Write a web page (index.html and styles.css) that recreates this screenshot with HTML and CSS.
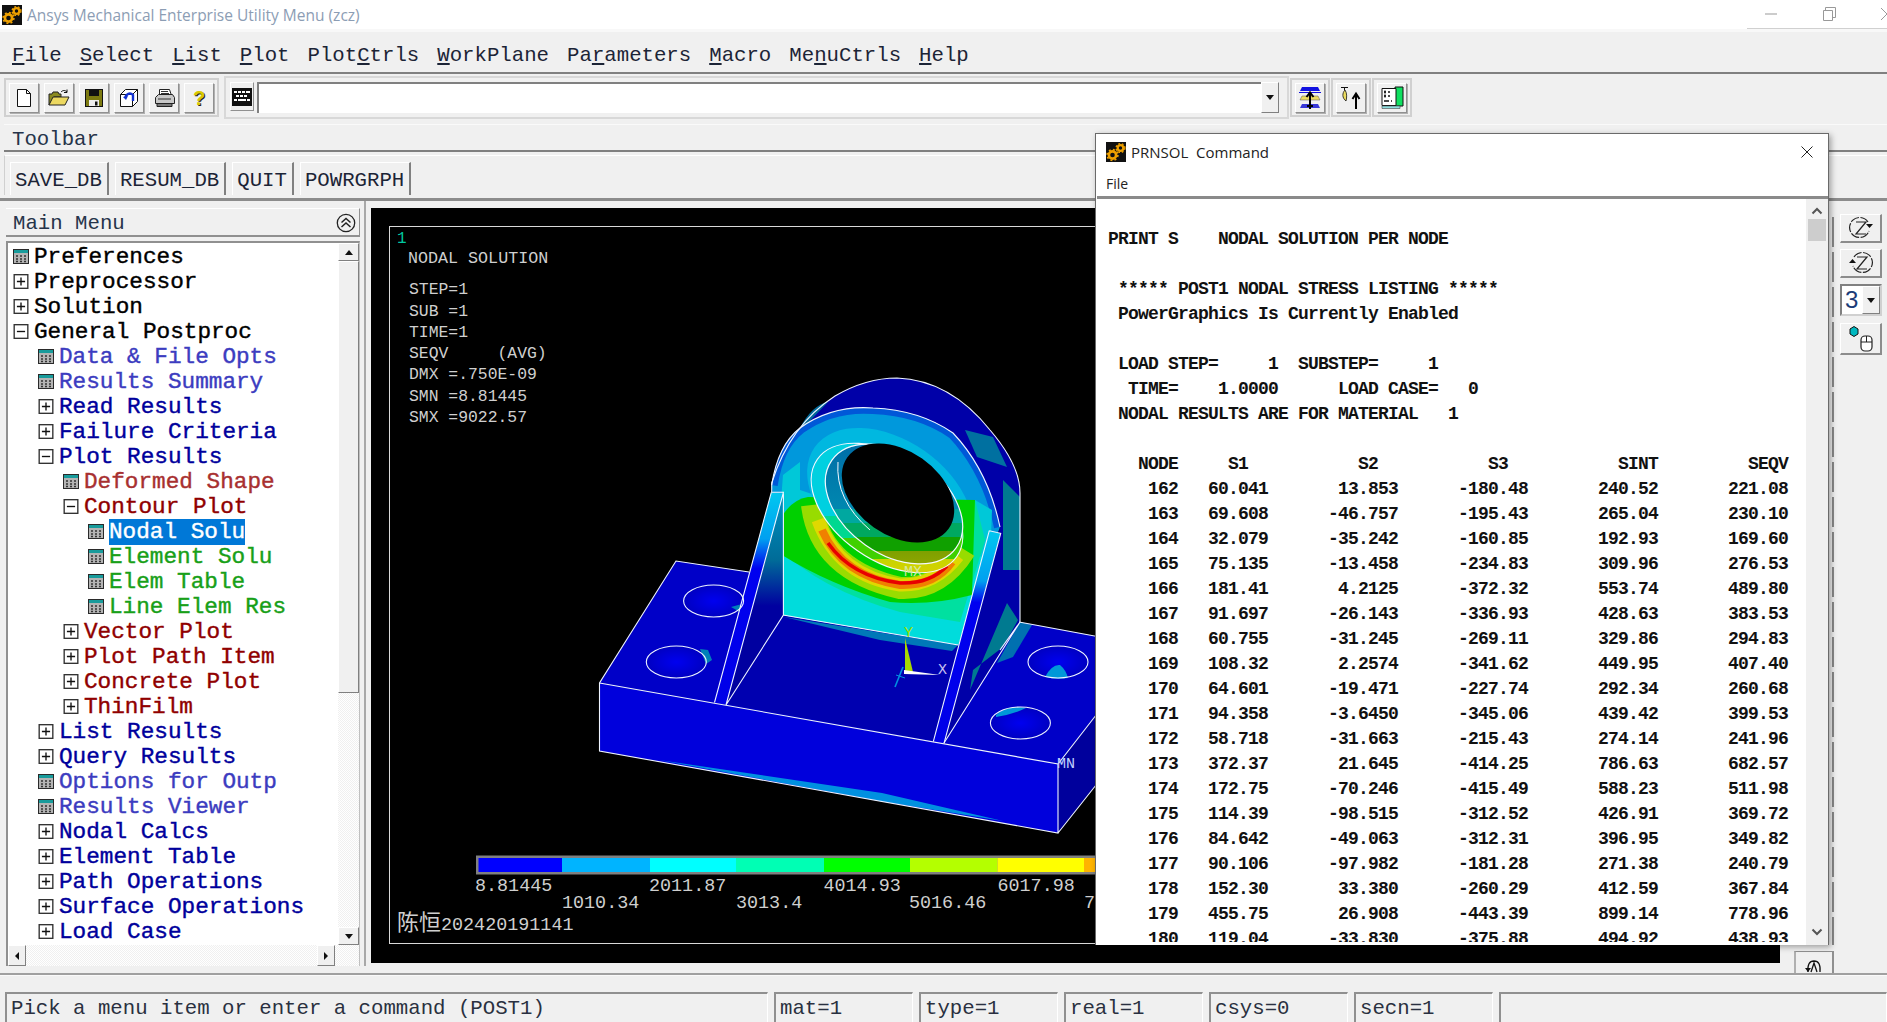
FILE: index.html
```html
<!DOCTYPE html>
<html lang="en">

<head>
    <meta charset="UTF-8">
    <title>Ansys Mechanical Enterprise Utility Menu (zcz)</title>
    <link rel="stylesheet" href="styles.css">
</head>

<body>
    <svg class="defs" width="0" height="0">
        <symbol id="gears" viewBox="0 0 20 20">
            <rect width="20" height="20" fill="#111" />
            <circle cx="6.5" cy="13" r="3.6" fill="none" stroke="#eea000" stroke-width="2.6" />
            <circle cx="6.5" cy="13" r="5.4" fill="none" stroke="#eea000" stroke-width="1.6" stroke-dasharray="2 2.2" />
            <circle cx="14.5" cy="6" r="2.8" fill="none" stroke="#eea000" stroke-width="2.2" />
            <circle cx="14.5" cy="6" r="4.4" fill="none" stroke="#eea000" stroke-width="1.4" stroke-dasharray="1.8 1.8" />
        </symbol>
        <symbol id="leaf" viewBox="0 0 16 15">
            <rect x=".5" y=".5" width="15" height="14" fill="#b4b4b4" stroke="#2a2a2a" />
            <rect x="1" y="1" width="14" height="3" fill="#189c9c" />
            <path d="M3 7h2M7 7h2M11 7h2M3 10h2M7 10h2M11 10h2M3 12.5h2M7 12.5h2M11 12.5h2" stroke="#333" stroke-width="1.3" />
        </symbol>
        <symbol id="plus" viewBox="0 0 11 11">
            <rect x=".5" y=".5" width="10" height="10" fill="#fff" stroke="#333" />
            <path d="M2.5 5.5h6M5.5 2.5v6" stroke="#111" />
        </symbol>
        <symbol id="minus" viewBox="0 0 11 11">
            <rect x=".5" y=".5" width="10" height="10" fill="#fff" stroke="#333" />
            <path d="M2.5 5.5h6" stroke="#111" />
        </symbol>
    </svg>

    <div class="titlebar">
        <svg class="app-icon"><use href="#gears" /></svg>
        <span class="title-text">Ansys Mechanical Enterprise Utility Menu (zcz)</span>
        <div class="win-controls">
            <svg width="14" height="14" viewBox="0 0 14 14"><path d="M1 7h12" stroke="#999" /></svg>
            <svg width="14" height="14" viewBox="0 0 14 14"><path d="M1.5 3.5h9v10h-9zM3.5 3V.5h10v10h-3" fill="none" stroke="#999" /></svg>
            <svg width="14" height="14" viewBox="0 0 14 14"><path d="M1 1l12 12M13 1L1 13" stroke="#999" /></svg>
        </div>
    </div>

    <div class="menubar">
        <span><u>F</u>ile</span>
        <span><u>S</u>elect</span>
        <span><u>L</u>ist</span>
        <span><u>P</u>lot</span>
        <span>Plot<u>C</u>trls</span>
        <span><u>W</u>orkPlane</span>
        <span>Pa<u>r</u>ameters</span>
        <span><u>M</u>acro</span>
        <span>Me<u>n</u>uCtrls</span>
        <span><u>H</u>elp</span>
    </div>

    <div class="toolbar">
        <div class="tool-group">
            <button class="tool-btn">
                <svg width="16" height="20" viewBox="0 0 16 20"><path d="M1.5 1.5h9l4 4v13h-13z" fill="#fff" stroke="#111" /><path d="M10.5 1.5v4h4" fill="none" stroke="#111" /></svg>
            </button>
            <button class="tool-btn">
                <svg width="22" height="20" viewBox="0 0 22 20"><path d="M1 17V6h3l1-2h5l1 2h2v3H6L1 17z" fill="#8a8a20" stroke="#222" /><path d="M1 17L5 9h16l-4 8z" fill="#ecd860" stroke="#222" /><path d="M13 4c2-2 4-2 6 0M19 1.5V4.5h-3" fill="none" stroke="#111" /></svg>
            </button>
            <button class="tool-btn">
                <svg width="18" height="18" viewBox="0 0 18 18"><rect x=".5" y=".5" width="17" height="17" fill="#7c7a10" stroke="#111" /><rect x="4" y="1" width="10" height="6" fill="#111" /><rect x="4" y="11" width="10" height="6" fill="#eee" /><rect x="10" y="12.5" width="2.5" height="4" fill="#111" /></svg>
            </button>
            <button class="tool-btn">
                <svg width="20" height="20" viewBox="0 0 20 20"><path d="M1.5 6.5h12v12h-12zM1.5 6.5l5-5h12v12l-5 5M13.5 6.5l5-5" fill="#fff" stroke="#111" /><path d="M6 10c1-4 5-6 8-3v6" fill="none" stroke="#1030d0" stroke-width="2.4" /><path d="M4 9l3 3 2-4z" fill="#1030d0" /></svg>
            </button>
            <button class="tool-btn">
                <svg width="21" height="20" viewBox="0 0 21 20"><path d="M5.5 1.5h10l2 6h-12z" fill="#fff" stroke="#222" /><path d="M1.5 9.5l3-3h14l2 3v6h-19z" fill="#c8c8c8" stroke="#222" /><path d="M3 15.5h15v3H3z" fill="#777" stroke="#222" /><path d="M7 3.5h7M7 5.5h8M4 11h13" stroke="#333" /></svg>
            </button>
            <button class="tool-btn help-btn">?</button>
        </div>

        <div class="command-group">
            <button class="calc-btn">
                <svg width="20" height="18" viewBox="0 0 20 18"><rect width="20" height="18" fill="#111" /><path d="M2 3h3v2H2zM6 3h3v2H6zM10 3h3v2h-3zM14 3h4v2h-4zM4 7h3v2H4zM8 7h3v2H8zM12 7h3v2h-3zM2 11h3v2H2zM6 11h8v2H6zM15 11h3v2h-3z" fill="#fff" /></svg>
            </button>
            <div class="command-input"></div>
            <div class="drop-btn"><i class="caret"></i></div>
        </div>

        <div class="tool-cell"><button class="tool-btn">
            <svg width="22" height="24" viewBox="0 0 22 24"><path d="M3 1h16l2 4H1z" fill="#1010e0" /><path d="M3 10h16l2 4H1z" fill="#ecdc60" stroke="#555" stroke-width=".5" /><path d="M3 18h16l2 4H1z" fill="#3838d8" /><path d="M0 6.500h22" stroke="#1010e0" /><path d="M11 17V8M7.500 11L11 6.500 14.500 11M11 17v6M8 20h6" stroke="#000" stroke-width="2" fill="none" /></svg>
        </button></div>
        <div class="tool-cell"><button class="tool-btn">
            <svg width="24" height="24" viewBox="0 0 24 24"><path d="M2 1.500h7M5.500 2v2" stroke="#111" /><path d="M6 4c-3 3-3 8 1 11 1-4 1-8-1-11z" fill="#ecdc60" stroke="#111" stroke-width=".8" /><path d="M17 23V9M13.500 13L17 7.500 20.500 13" stroke="#000" stroke-width="2" fill="none" /></svg>
        </button></div>
        <div class="tool-cell"><button class="tool-btn">
            <svg width="24" height="24" viewBox="0 0 24 24"><path d="M15 1h8v19h-8z" fill="#10e060" stroke="#111" /><path d="M2 2.500h14v17H2z" fill="#fff" stroke="#111" /><path d="M2 20h18v2.500H2z" fill="#90e0e0" stroke="#444" stroke-width=".6" /><path d="M4 6h2M8 6h2M5 4.500v3M4 10h2M8 10h2M5 8.500v3M4 15h5M11 15h1" stroke="#111" stroke-width="1.300" /></svg>
        </button></div>
    </div>

    <div class="label-row">Toolbar</div>

    <div class="abbr-row">
        <div class="abbr-group">
            <button class="abbr-btn">SAVE_DB</button>
            <button class="abbr-btn">RESUM_DB</button>
            <button class="abbr-btn">QUIT</button>
            <button class="abbr-btn">POWRGRPH</button>
        </div>
    </div>

    <div class="main">
        <div class="menu-panel">
            <div class="menu-head">
                <span>Main Menu</span>
                <svg width="20" height="20" viewBox="0 0 20 20"><circle cx="10" cy="10" r="8.700" fill="none" stroke="#222" stroke-width="1.300" /><path d="M5.500 9.500L10 5.500l4.500 4M5.500 14L10 10l4.500 4" fill="none" stroke="#222" stroke-width="1.500" /></svg>
            </div>
            <div class="tree-box">
                <div class="tree-top">
                    <ul class="tree">
                        <li class="row l0"><svg class="ic"><use href="#leaf" /></svg>Preferences</li>
                        <li class="row l0"><svg class="ic"><use href="#plus" /></svg>Preprocessor</li>
                        <li class="row l0"><svg class="ic"><use href="#plus" /></svg>Solution</li>
                        <li class="row l0"><svg class="ic"><use href="#minus" /></svg>General Postproc</li>
                        <li class="row l1 soft"><svg class="ic"><use href="#leaf" /></svg>Data &amp; File Opts</li>
                        <li class="row l1 soft"><svg class="ic"><use href="#leaf" /></svg>Results Summary</li>
                        <li class="row l1"><svg class="ic"><use href="#plus" /></svg>Read Results</li>
                        <li class="row l1"><svg class="ic"><use href="#plus" /></svg>Failure Criteria</li>
                        <li class="row l1"><svg class="ic"><use href="#minus" /></svg>Plot Results</li>
                        <li class="row l2 soft"><svg class="ic"><use href="#leaf" /></svg>Deformed Shape</li>
                        <li class="row l2"><svg class="ic"><use href="#minus" /></svg>Contour Plot</li>
                        <li class="row l3"><svg class="ic"><use href="#leaf" /></svg><span class="picked">Nodal Solu</span></li>
                        <li class="row l3"><svg class="ic"><use href="#leaf" /></svg>Element Solu</li>
                        <li class="row l3"><svg class="ic"><use href="#leaf" /></svg>Elem Table</li>
                        <li class="row l3"><svg class="ic"><use href="#leaf" /></svg>Line Elem Res</li>
                        <li class="row l2"><svg class="ic"><use href="#plus" /></svg>Vector Plot</li>
                        <li class="row l2"><svg class="ic"><use href="#plus" /></svg>Plot Path Item</li>
                        <li class="row l2"><svg class="ic"><use href="#plus" /></svg>Concrete Plot</li>
                        <li class="row l2"><svg class="ic"><use href="#plus" /></svg>ThinFilm</li>
                        <li class="row l1"><svg class="ic"><use href="#plus" /></svg>List Results</li>
                        <li class="row l1"><svg class="ic"><use href="#plus" /></svg>Query Results</li>
                        <li class="row l1 soft"><svg class="ic"><use href="#leaf" /></svg>Options for Outp</li>
                        <li class="row l1 soft"><svg class="ic"><use href="#leaf" /></svg>Results Viewer</li>
                        <li class="row l1"><svg class="ic"><use href="#plus" /></svg>Nodal Calcs</li>
                        <li class="row l1"><svg class="ic"><use href="#plus" /></svg>Element Table</li>
                        <li class="row l1"><svg class="ic"><use href="#plus" /></svg>Path Operations</li>
                        <li class="row l1"><svg class="ic"><use href="#plus" /></svg>Surface Operations</li>
                        <li class="row l1"><svg class="ic"><use href="#plus" /></svg>Load Case</li>
                    </ul>
                    <div class="vscroll">
                        <div class="sb-btn"><i class="caret up"></i></div>
                        <div class="sb-thumb"></div>
                        <div class="sb-track"></div>
                        <div class="sb-btn"><i class="caret"></i></div>
                    </div>
                </div>
                <div class="hscroll">
                    <div class="sb-btn side"><i class="caret left"></i></div>
                    <div class="sb-btn side"><i class="caret right"></i></div>
                </div>
            </div>
        </div>

        <div class="graphics">
            <svg class="plot" width="1409" height="755" viewBox="371 208 1409 755">
                <defs>
                    <linearGradient id="ribL" gradientUnits="userSpaceOnUse" x1="0" y1="492" x2="0" y2="705">
                        <stop offset="0" stop-color="#00c8f0" /><stop offset=".22" stop-color="#00a0f0" /><stop offset=".36" stop-color="#0000f0" /><stop offset="1" stop-color="#0000e8" />
                    </linearGradient>
                    <linearGradient id="ribR" gradientUnits="userSpaceOnUse" x1="0" y1="530" x2="0" y2="743">
                        <stop offset="0" stop-color="#00c8f0" /><stop offset=".24" stop-color="#00a0f0" /><stop offset=".34" stop-color="#0000f0" /><stop offset="1" stop-color="#0000e8" />
                    </linearGradient>
                    <linearGradient id="gusset" gradientUnits="userSpaceOnUse" x1="0" y1="495" x2="0" y2="680">
                        <stop offset="0" stop-color="#0090c0" /><stop offset=".35" stop-color="#006c98" /><stop offset=".6" stop-color="#0000a0" /><stop offset="1" stop-color="#0000a0" />
                    </linearGradient>
                    <linearGradient id="bore" gradientUnits="userSpaceOnUse" x1="0" y1="450" x2="0" y2="568" gradientTransform="rotate(-35 894 504)">
                        <stop offset="0" stop-color="#0070a8" /><stop offset=".5" stop-color="#0088b0" /><stop offset=".5" stop-color="#00a8a0" /><stop offset=".62" stop-color="#00a8a0" /><stop offset=".62" stop-color="#00a860" /><stop offset=".74" stop-color="#00a860" /><stop offset=".74" stop-color="#10a000" /><stop offset=".86" stop-color="#10a000" /><stop offset=".86" stop-color="#80a000" /><stop offset="1" stop-color="#90a800" />
                    </linearGradient>
                    <linearGradient id="ring" gradientUnits="userSpaceOnUse" x1="0" y1="443" x2="0" y2="575" gradientTransform="rotate(-35 887 508)">
                        <stop offset="0" stop-color="#00d0e0" /><stop offset=".55" stop-color="#00d0e0" /><stop offset=".55" stop-color="#00d890" /><stop offset=".72" stop-color="#00d890" /><stop offset=".72" stop-color="#40d000" /><stop offset=".88" stop-color="#40d000" /><stop offset=".88" stop-color="#c8d400" /><stop offset="1" stop-color="#d8d000" />
                    </linearGradient>
                    <radialGradient id="holeFill" cx=".5" cy=".5" r=".6">
                        <stop offset="0" stop-color="#0000f0" /><stop offset="1" stop-color="#0000b8" />
                    </radialGradient>
                    <clipPath id="faceClip">
                        <path d="M771.700 485Q778 445 800 428 Q832 405 873 408 Q920 410 953 433 Q988 470 1000 527L958.300 645L781.700 615z" />
                    </clipPath>
                </defs>

                <!-- base plate -->
                <path d="M676 561L599.500 683L1058 764L1100 710V637L1019 622L749 572z" fill="#0000c8" />
                <path d="M599.500 683L1058 764V833L599.500 751z" fill="#0000dc" />
                <path d="M1058 764L1100 710V780L1058 833z" fill="#00009c" />
                <path d="M659 760L882 793L1003 821L882 801.500z" fill="#0090e0" />
                <path d="M1020 622L1032 625L1013 657L997 663z" fill="#0070b0" />
                <ellipse cx="713.600" cy="601" rx="30" ry="16" fill="url(#holeFill)" />
                <ellipse cx="676.300" cy="662" rx="30" ry="16" fill="url(#holeFill)" />
                <ellipse cx="1058" cy="662" rx="30" ry="16" fill="url(#holeFill)" />
                <ellipse cx="1020.400" cy="723" rx="30" ry="16" fill="url(#holeFill)" />
                <path d="M700 649L708 650L712 660L706 664z" fill="#0080b8" />
                <path d="M731 607L742 604L740 612z" fill="#0080b8" />
                <path d="M1045 677Q1052 664 1060 665Q1066 670 1068 678Q1056 680 1045 677z" fill="#0098d8" />
                <path d="M996 715Q1008 704 1026 708Q1014 714 996 717z" fill="#0098d8" />

                <!-- floor between the ribs -->
                <path d="M781.700 615L958.300 645L944 743L726 704z" fill="#0000b0" />
                <path d="M784 617L958 645L952 651L880 640z" fill="#0078b8" />

                <!-- back of the upright -->
                <path d="M771.700 483Q790 425 835 396Q866 378 897 378Q950 380 990 430Q1020 465 1020 493V622L944 743L1000 527z" fill="#0000a8" />
                <path d="M965 430L993 437L1007 467L977 457z" fill="#0070a0" />
                <path d="M1003 480L1020 497V570H1003z" fill="#007a90" />
                <path d="M1007 603L1018 620L1003 647L973 670L970 690z" fill="#007a90" />
                <path d="M800 428Q812 405 828 402L806 425z" fill="#006898" />

                <!-- front of the upright -->
                <g clip-path="url(#faceClip)">
                    <rect x="760" y="400" width="260" height="250" fill="#0098dc" />
                    <path d="M771.700 485Q778 445 800 428 Q832 405 873 408 Q920 410 953 433 Q988 470 1000 527" fill="none" stroke="#0058d8" stroke-width="12" />
                    <path d="M783 475L800 462L800 490L830 500L820 540L778 540z" fill="#00c8d8" />
                    <path d="M975 500L992 510L990 560L960 560z" fill="#00c8d8" />
                    <ellipse cx="890" cy="500" rx="92" ry="60" transform="rotate(35 890 500)" fill="#00b8e0" />
                    <path d="M775 520L1000 560V660H775z" fill="#00dcdc" />
                    <path d="M775 545Q820 590 900 612L960 622L985 540L975 500L810 500z" fill="#00e0a0" />
                    <path d="M780 520Q790 500 808 497L975 500L972 595Q930 606 890 602Q830 585 782 555z" fill="#00d000" />
                    <path d="M812 505Q820 570 900 588Q940 590 965 550" fill="none" stroke="#98dc00" stroke-width="22" />
                    <path d="M818 520Q838 576 900 585Q935 586 958 556" fill="none" stroke="#e0d800" stroke-width="13" />
                    <path d="M822 530Q842 576 900 585Q935 586 952 562" fill="none" stroke="#f08000" stroke-width="8" />
                </g>
                <path d="M828 543Q852 577 900 583Q930 584 947 566" fill="none" stroke="#e80000" stroke-width="3.500" />

                <!-- bore -->
                <ellipse cx="887" cy="508" rx="85" ry="52" transform="rotate(35 887 508)" fill="url(#ring)" stroke="#f4f8ff" stroke-width="1.200" />
                <ellipse cx="894" cy="504" rx="76" ry="50" transform="rotate(35 894 504)" fill="url(#bore)" stroke="#f4f8ff" stroke-width="1.200" />
                <ellipse cx="898" cy="493" rx="62" ry="42" transform="rotate(35 898 493)" fill="#000" />
                <path d="M838 462Q835 500 870 530" fill="none" stroke="#f4f8ff" />

                <!-- ribs -->
                <path d="M783.400 493.400L783 615L726 705z" fill="url(#gusset)" />
                <path d="M771.300 492.300L783.400 493.400L726 705L714.500 702.500z" fill="url(#ribL)" />
                <path d="M989.300 530.700L1000.700 533.300L944 743.300L933.300 741.700z" fill="url(#ribR)" />

                <!-- edges -->
                <g fill="none" stroke="#eef4ff" stroke-width="1.100">
                    <path d="M749 572L676 561L599.500 683V751L1058 833V764L599.500 683M1058 764L1100 710M1058 833L1100 780M1019 622L1100 637" />
                    <path d="M771.700 492V483Q790 425 835 396Q866 378 897 378Q950 380 990 430Q1020 465 1020 493V622L944 743M1020 622L1000 650" />
                    <path d="M771.700 485Q778 445 800 428 Q832 405 873 408 Q920 410 953 433 Q988 470 1000 527" />
                    <path d="M771.300 492.300H783.400L726 705M771.300 492.300L714.500 702.500M783.400 493.400V615L726 705M783 615L958.300 645" />
                    <path d="M989.300 530.700L1000.700 533.300L944 743.300M989.300 530.700L933.300 741.700" />
                    <ellipse cx="713.600" cy="601" rx="30" ry="16" />
                    <ellipse cx="676.300" cy="662" rx="30" ry="16" />
                    <ellipse cx="1058" cy="662" rx="30" ry="16" />
                    <ellipse cx="1020.400" cy="723" rx="30" ry="16" />
                </g>

                <!-- triad -->
                <path d="M905 638L913 672H905z" fill="#a8d800" />
                <path d="M904 670L940 675L904 674z" fill="#fff" />
                <path d="M903 667L895 687" stroke="#0090e0" stroke-width="1.600" />
                <path d="M896 675L905 678" stroke="#0090e0" />
                <text class="tag" x="904" y="637" fill="#a0e000">Y</text>
                <text class="tag" x="938" y="674" fill="#c8c0f0">X</text>
                <text class="tag" x="904" y="576" fill="#d4e8a0">MX</text>
                <text class="tag" x="1057" y="768" fill="#c0d0ff">MN</text>

                <!-- frame and labels -->
                <rect x="389.500" y="226.500" width="1380" height="717" fill="none" stroke="#d8d8d8" />
                <text class="plot-num" x="397" y="243">1</text>
                <text class="info" x="408" y="263">NODAL SOLUTION</text>
                <text class="info small" x="409" y="294">STEP=1</text>
                <text class="info small" x="409" y="315.500">SUB =1</text>
                <text class="info small" x="409" y="337">TIME=1</text>
                <text class="info small" x="409" y="358" xml:space="preserve">SEQV     (AVG)</text>
                <text class="info small" x="409" y="379">DMX =.750E-09</text>
                <text class="info small" x="409" y="400.500">SMN =8.81445</text>
                <text class="info small" x="409" y="421.500">SMX =9022.57</text>

                <rect x="476" y="855.500" width="700" height="19" fill="#808080" />
                <rect x="478.500" y="858" width="83.500" height="14" fill="#0000ff" />
                <rect x="562" y="858" width="88" height="14" fill="#00b4ff" />
                <rect x="650" y="858" width="86" height="14" fill="#00ffff" />
                <rect x="736" y="858" width="88" height="14" fill="#00ffb4" />
                <rect x="824" y="858" width="86" height="14" fill="#00ff00" />
                <rect x="910" y="858" width="87.500" height="14" fill="#b4ff00" />
                <rect x="997.500" y="858" width="86.500" height="14" fill="#ffff00" />
                <rect x="1084" y="858" width="60" height="14" fill="#ffb400" />
                <text class="legend" x="475" y="891">8.81445</text>
                <text class="legend" x="649" y="891">2011.87</text>
                <text class="legend" x="823.500" y="891">4014.93</text>
                <text class="legend" x="997.500" y="891">6017.98</text>
                <text class="legend" x="562" y="908">1010.34</text>
                <text class="legend" x="736" y="908">3013.4</text>
                <text class="legend" x="909" y="908">5016.46</text>
                <text class="legend" x="1084" y="908">7</text>
                <text class="legend" x="397" y="930"><tspan class="cjk">陈恒</tspan>202420191141</text>
            </svg>
        </div>

        <div class="side-panel">
            <div class="sliver-col">
                <div class="slivers"></div>
                <div class="rotate-stub">
                    <svg width="20" height="14" viewBox="0 0 20 14"><path d="M4 13Q3 2 10 2t6 11M7 13l3-9 3 9" fill="none" stroke="#111" stroke-width="1.300" /><path d="M1 9h6l-3 4z" fill="#111" /></svg>
                </div>
            </div>
            <div class="view-col">
                <button class="view-btn">
                    <svg width="26" height="24" viewBox="0 0 26 24"><path d="M20 6A10 10 0 1 0 21 15" fill="none" stroke="#222" stroke-dasharray="9 1.500" stroke-width="1.200" /><path d="M8 6h10L8 18h10" fill="none" stroke="#222" stroke-width="1.200" /><path d="M18 8h7l-3.500 4z" fill="#111" /></svg>
                </button>
                <button class="view-btn">
                    <svg width="26" height="24" viewBox="0 0 26 24"><path d="M6 6A10 10 0 1 1 5 15" fill="none" stroke="#222" stroke-dasharray="9 1.500" stroke-width="1.200" /><path d="M9 6h10L9 18h10" fill="none" stroke="#222" stroke-width="1.200" /><path d="M1 12h7L4.500 8z" fill="#111" /></svg>
                </button>
                <div class="view-combo"><span>3</span><div class="drop-btn small"><i class="caret"></i></div></div>
                <button class="view-btn tall">
                    <svg width="28" height="28" viewBox="0 0 28 28"><path d="M3 4l4-2.500 4 2.500v5l-4 2.500-4-2.500z" fill="#00b8c0" stroke="#111" /><rect x="14" y="11" width="11" height="15" rx="4" fill="#fff" stroke="#222" stroke-width="1.200" /><path d="M14 17h11M19.500 11v6" stroke="#222" /></svg>
                </button>
            </div>
        </div>
    </div>

    <div class="statusbar">
        <div class="stat prompt">Pick a menu item or enter a command (POST1)</div>
        <div class="stat cell">mat=1</div>
        <div class="stat cell">type=1</div>
        <div class="stat cell">real=1</div>
        <div class="stat cell">csys=0</div>
        <div class="stat cell">secn=1</div>
        <div class="stat fill"></div>
    </div>

    <div class="dialog">
        <div class="dialog-title">
            <svg class="app-icon"><use href="#gears" /></svg>
            <span class="dialog-name">PRNSOL&nbsp; Command</span>
            <svg class="dialog-close" width="14" height="14" viewBox="0 0 14 14"><path d="M1.500 1.500l11 11M12.500 1.500l-11 11" stroke="#222" /></svg>
        </div>
        <div class="dialog-menu">File</div>
        <div class="dialog-body">
            <pre class="listing">
PRINT S    NODAL SOLUTION PER NODE

 ***** POST1 NODAL STRESS LISTING *****
 PowerGraphics Is Currently Enabled

 LOAD STEP=     1  SUBSTEP=     1
  TIME=    1.0000      LOAD CASE=   0
 NODAL RESULTS ARE FOR MATERIAL   1

   NODE     S1           S2           S3           SINT         SEQV
    162   60.041       13.853      -180.48       240.52       221.08
    163   69.608      -46.757      -195.43       265.04       230.10
    164   32.079      -35.242      -160.85       192.93       169.60
    165   75.135      -13.458      -234.83       309.96       276.53
    166   181.41       4.2125      -372.32       553.74       489.80
    167   91.697      -26.143      -336.93       428.63       383.53
    168   60.755      -31.245      -269.11       329.86       294.83
    169   108.32       2.2574      -341.62       449.95       407.40
    170   64.601      -19.471      -227.74       292.34       260.68
    171   94.358      -3.6450      -345.06       439.42       399.53
    172   58.718      -31.663      -215.43       274.14       241.96
    173   372.37       21.645      -414.25       786.63       682.57
    174   172.75      -70.246      -415.49       588.23       511.98
    175   114.39      -98.515      -312.52       426.91       369.72
    176   84.642      -49.063      -312.31       396.95       349.82
    177   90.106      -97.982      -181.28       271.38       240.79
    178   152.30       33.380      -260.29       412.59       367.84
    179   455.75       26.908      -443.39       899.14       778.96
    180   119.04      -33.830      -375.88       494.92       438.93</pre>
            <div class="dialog-scroll">
                <svg width="12" height="8" viewBox="0 0 12 8"><path d="M1.500 6.500L6 2l4.500 4.500" fill="none" stroke="#555" stroke-width="2" /></svg>
                <div class="dialog-thumb"></div>
                <svg class="chev-down" width="12" height="8" viewBox="0 0 12 8"><path d="M1.500 1.500L6 6l4.500-4.500" fill="none" stroke="#555" stroke-width="2" /></svg>
            </div>
        </div>
    </div>
</body>

</html>
```

FILE: styles.css
```css
* {
    box-sizing: border-box;
}

html, body {
    margin: 0;
    height: 100%;
    overflow: hidden;
}

body {
    display: flex;
    flex-direction: column;
    position: relative;
    background-color: #f0f0f0;
    font-family: "Liberation Mono", monospace;
    font-size: 20.7px;
    color: #1c2436;
}

button {
    font: inherit;
    color: inherit;
    padding: 0;
}

.defs {
    position: absolute;
}

.app-icon {
    width: 20px;
    height: 20px;
    flex: none;
}

/* window title */
.titlebar {
    height: 29px;
    background-color: #fff;
    display: flex;
    align-items: center;
    padding-left: 2px;
    font-family: "Open Sans", sans-serif;
    font-size: 15.500px;
    color: #8c9db4;
}

.title-text {
    margin-left: 5px;
}

.win-controls {
    margin-left: auto;
    width: 140px;
    height: 29px;
    border-bottom: 1px solid #d0d0d0;
    display: flex;
    align-items: center;
    gap: 44px;
    padding-left: 17px;
    overflow: hidden;
}

.win-controls svg {
    flex: none;
}

/* menus */
.menubar {
    height: 45px;
    display: flex;
    gap: 18px;
    align-items: center;
    padding: 6px 0 0 12px;
    border-top: 3px solid #f8f8f8;
    border-bottom: 2px solid #808080;
}

.toolbar {
    height: 50px;
    display: flex;
    align-items: flex-start;
    padding: 2px 0 0 4px;
}

.tool-group {
    display: flex;
    gap: 5px;
    padding: 3px;
    margin-top: 2px;
    border: 2px solid #d0d0d0;
    height: 39px;
}

.tool-btn {
    width: 30px;
    height: 30px;
    display: flex;
    align-items: center;
    justify-content: center;
    background-color: #f0f0f0;
    border: 1px solid #fff;
    border-right-color: #909090;
    border-bottom-color: #909090;
    box-shadow: 1px 1px 0 #b0b0b0;
}

.help-btn {
    font-family: "Liberation Sans", sans-serif;
    font-weight: bold;
    font-size: 20px;
    color: #d8c800;
    text-shadow: 1px 1px 0 #222;
}

.command-group {
    margin-left: 5px;
    width: 1065px;
    height: 43px;
    display: flex;
    gap: 2px;
    padding: 4px 8px 4px 4px;
    border: 2px solid #d8d8d8;
}

.calc-btn {
    width: 24px;
    height: 29px;
    display: flex;
    align-items: center;
    justify-content: center;
    background-color: #f0f0f0;
    border: 1px solid #fff;
    border-right-color: #909090;
    border-bottom-color: #909090;
}

.command-input {
    flex: 1;
    background-color: #fff;
    border-top: 2px solid #808080;
    border-left: 2px solid #808080;
    margin-left: 1px;
}

.drop-btn {
    width: 18px;
    display: flex;
    align-items: center;
    justify-content: center;
    background-color: #f0f0f0;
    border: 1px solid #fff;
    border-right-color: #808080;
    border-bottom-color: #808080;
    margin-left: -2px;
}

.caret {
    display: block;
    width: 0;
    height: 0;
    border-left: 4px solid transparent;
    border-right: 4px solid transparent;
    border-top: 5px solid #111;
}

.caret.up {
    border-top: 0;
    border-bottom: 5px solid #111;
}

.caret.left {
    border: 4px solid transparent;
    border-left: 0;
    border-right: 4px solid #111;
}

.caret.right {
    border: 4px solid transparent;
    border-right: 0;
    border-left: 4px solid #111;
}

.tool-cell {
    width: 40px;
    height: 39px;
    margin: 2px 0 0 1px;
    border: 2px solid #d0d0d0;
    display: flex;
    align-items: center;
    justify-content: center;
}

.label-row {
    height: 28px;
    margin: 0 0 0 4px;
    padding-left: 8px;
    line-height: 29px;
    border-top: 1px solid #fafafa;
    border-bottom: 2px solid #808080;
    color: #26344a;
}

.abbr-row {
    height: 49px;
    padding: 3px 0 0 4px;
    border-bottom: 3px solid #8c8c8c;
}

.abbr-group {
    height: 40px;
    display: flex;
    align-items: flex-end;
    gap: 6px;
    padding-left: 5px;
    border-top: 1px solid #fff;
    border-left: 1px solid #d0d0d0;
}

.abbr-btn {
    height: 33px;
    padding: 3px 5px 0 4px;
    background-color: #f0f0f0;
    border: 1px solid #fff;
    border-bottom: 0;
    border-right: 2px solid #808080;
    line-height: 30px;
}

/* main area */
.main {
    flex: 1;
    display: flex;
    min-height: 0;
    border-bottom: 2px solid #a0a0a0;
}

.menu-panel {
    width: 366px;
    padding: 7px 4px 0 6px;
    border-right: 2px solid #a8a8a8;
    flex: none;
    margin-bottom: 7px;
}

.menu-head {
    height: 29px;
    display: flex;
    align-items: center;
    justify-content: space-between;
    padding: 2px 3px 0 7px;
    border-top: 1px solid #fff;
    border-bottom: 2px solid #909090;
    border-right: 1px solid #909090;
    color: #26344a;
}

.tree-box {
    margin-top: 4px;
    border-top: 2px solid #909090;
    border-left: 2px solid #909090;
    border-right: 1px solid #c0c0c0;
}

.tree-top {
    display: flex;
    height: 702px;
    background-color: #fff;
}

.tree {
    list-style: none;
    margin: 0;
    padding: 1px 0 0 5px;
    flex: 1;
    overflow: hidden;
    font-size: 22.700px;
    -webkit-text-stroke: 0.400px;
}

.row {
    height: 25px;
    display: flex;
    align-items: center;
    white-space: nowrap;
}

.ic {
    width: 16px;
    height: 15px;
    margin-right: 5px;
    flex: none;
}

.row svg {
    overflow: visible;
}

.l0 {
    color: #000;
}

.l1 {
    color: #00009c;
    padding-left: 25px;
}

.l2 {
    color: #900000;
    padding-left: 50px;
}

.l3 {
    color: #18a018;
    padding-left: 75px;
}

.l1.soft {
    color: #3c3cc0;
}

.l2.soft {
    color: #a83030;
}

.picked {
    background-color: #0078d7;
    color: #fff;
}

.vscroll {
    width: 21px;
    display: flex;
    flex-direction: column;
    background-color: #f0f0f0;
}

.sb-btn {
    height: 18px;
    display: flex;
    align-items: center;
    justify-content: center;
    background-color: #f0f0f0;
    border: 1px solid #fff;
    border-right-color: #808080;
    border-bottom-color: #808080;
    flex: none;
}

.sb-thumb {
    height: 432px;
    background-color: #f0f0f0;
    border: 1px solid #fff;
    border-right-color: #808080;
    border-bottom-color: #808080;
    flex: none;
}

.sb-track {
    flex: 1;
    background: repeating-conic-gradient(#f0f0f0 0 25%, #fff 0 50%) 0 0 / 2px 2px;
}

.hscroll {
    height: 21px;
    display: flex;
    justify-content: space-between;
    padding-right: 24px;
    background: repeating-conic-gradient(#f0f0f0 0 25%, #fff 0 50%) 0 0 / 2px 2px;
}

.sb-btn.side {
    width: 18px;
    height: 21px;
}

.graphics {
    width: 1409px;
    height: 755px;
    margin: 7px 0 0 5px;
    background-color: #000;
    flex: none;
}

.plot {
    display: block;
    font-family: "Liberation Mono", monospace;
}

.plot-num {
    font-size: 16px;
    fill: #00c8a0;
}

.info {
    font-size: 16.700px;
    fill: #cfcfcf;
    white-space: pre;
}

.info.small {
    font-size: 16.400px;
}

.legend {
    font-size: 18.400px;
    fill: #cfcfcf;
}

.cjk {
    font-family: "Noto Sans CJK SC", sans-serif;
    font-size: 22px;
}

.tag {
    font-size: 15px;
}

.side-panel {
    flex: 1;
    display: flex;
    padding-left: 2px;
}

.sliver-col {
    width: 52px;
    display: flex;
    flex-direction: column;
    align-items: flex-end;
    padding-top: 16px;
    flex: none;
}

.slivers {
    width: 100%;
    height: 729px;
    background: repeating-linear-gradient(#8a8a8a 0 30px, transparent 30px 35px) right top / 2px 100% no-repeat;
}

.rotate-stub {
    width: 40px;
    height: 22px;
    margin-top: 6px;
    display: flex;
    align-items: flex-end;
    justify-content: center;
    border-top: 1px solid #909090;
    border-left: 2px solid #b0b0b0;
    border-right: 2px solid #909090;
    overflow: hidden;
}

.view-col {
    padding: 13px 0 0 6px;
    display: flex;
    flex-direction: column;
    gap: 6px;
    width: 48px;
}

.view-btn {
    width: 42px;
    height: 29px;
    display: flex;
    align-items: center;
    justify-content: center;
    background-color: #f0f0f0;
    border: 1px solid #fff;
    border-right: 2px solid #8c8c8c;
    border-bottom: 2px solid #8c8c8c;
}

.view-btn.tall {
    height: 32px;
    margin-top: 1px;
}

.view-combo {
    width: 42px;
    height: 32px;
    display: flex;
    border: 2px solid #d0d0d0;
    border-top-color: #808080;
    border-left-color: #808080;
    background-color: #fff;
    font-family: "Liberation Sans", sans-serif;
    font-size: 24px;
    line-height: 28px;
    color: #1c3c78;
}

.view-combo span {
    padding-left: 3px;
    flex: 1;
}

.drop-btn.small {
    width: 18px;
    margin: 0;
}

/* status line */
.statusbar {
    flex: none;
    height: 47px;
    display: flex;
    align-items: flex-start;
    gap: 6px;
    padding: 16px 0 0 5px;
    border-top: 1px solid #fafafa;
    overflow: hidden;
    color: #2a3040;
}

.stat {
    height: 40px;
    border-top: 2px solid #909090;
    border-left: 2px solid #909090;
    border-right: 1px solid #fff;
    padding: 3px 0 0 4px;
    flex: none;
    white-space: nowrap;
}

.prompt {
    width: 763px;
}

.cell {
    width: 139px;
}

.fill {
    flex: 1;
}

/* floating PRNSOL window */
.dialog {
    position: absolute;
    left: 1095px;
    top: 133px;
    width: 734px;
    height: 812px;
    background-color: #fff;
    border: 1px solid #6a6a6a;
    border-bottom: 0;
    box-shadow: 2px 2px 6px rgba(0, 0, 0, 0.35);
    display: flex;
    flex-direction: column;
    font-family: "Open Sans", sans-serif;
    color: #222;
}

.dialog-title {
    height: 36px;
    display: flex;
    align-items: center;
    padding: 0 14px 0 10px;
    flex: none;
}

.dialog-name {
    margin-left: 5px;
    font-size: 15px;
    flex: 1;
}

.dialog-menu {
    height: 29px;
    padding-left: 9px;
    font-size: 14px;
    line-height: 27px;
    border-bottom: 3px solid #8a8a8a;
    flex: none;
    margin-left: 1px;
}

.dialog-body {
    flex: 1;
    display: flex;
    min-height: 0;
}

.listing {
    flex: 1;
    margin: 0 0 3px;
    padding: 28px 0 0 12px;
    overflow: hidden;
    font-family: "Liberation Mono", monospace;
    font-size: 18px;
    font-weight: bold;
    letter-spacing: -0.800px;
    line-height: 25px;
    color: #111;
}

.dialog-scroll {
    width: 22px;
    background-color: #f0f0f0;
    display: flex;
    flex-direction: column;
    align-items: center;
    padding-top: 8px;
    flex: none;
}

.dialog-thumb {
    width: 18px;
    height: 22px;
    margin-top: 4px;
    background-color: #cdcdcd;
}

.chev-down {
    margin-top: auto;
    margin-bottom: 9px;
}
```
